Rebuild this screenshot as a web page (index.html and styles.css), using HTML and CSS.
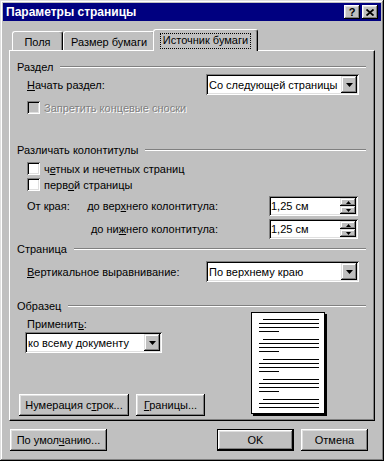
FILE: index.html
```html
<!DOCTYPE html>
<html lang="ru">
<head>
    <meta charset="UTF-8">
    <title>Параметры страницы</title>
    <link rel="stylesheet" href="styles.css">
</head>
<body>
    <div class="window">
        <div class="titlebar">
            <span class="title">Параметры страницы</span>
            <div class="title-buttons">
                <span class="tb-btn">?</span>
                <span class="tb-btn">
                    <svg width="8" height="7" viewBox="0 0 8 7"><path d="M0.5 0.5 L7.5 6.5 M7.5 0.5 L0.5 6.5" stroke="#000" stroke-width="1.8"/></svg>
                </span>
            </div>
        </div>
        <div class="content">
            <div class="tabs">
                <div class="tab tab-fields">Поля</div>
                <div class="tab tab-size">Размер бумаги</div>
                <div class="tab active"><span class="focus">Источник бумаги</span></div>
            </div>
            <div class="panel">
                <div class="group-head group-section"><span>Раздел</span><i class="etch"></i></div>
                <div class="field-row row-start">
                    <span><u>Н</u>ачать раздел:</span>
                    <div class="combo combo-wide">
                        <span class="combo-text">Со следующей страницы</span>
                        <span class="drop"><svg width="7" height="4" viewBox="0 0 7 4"><path d="M0 0 H7 L3.5 4 Z" fill="#000"/></svg></span>
                    </div>
                </div>
                <div class="check-row row-endnotes disabled">
                    <span class="check"></span>
                    <span>Запретить концевые сноски</span>
                </div>

                <div class="group-head group-headers"><span>Различать колонтитулы</span><i class="etch"></i></div>
                <div class="check-row row-even">
                    <span class="check"></span>
                    <span>ч<u>е</u>тных и нечетных страниц</span>
                </div>
                <div class="check-row row-first">
                    <span class="check"></span>
                    <span>перв<u>о</u>й страницы</span>
                </div>
                <div class="spin-row row-top">
                    <span class="edge-label">От края:</span>
                    <span class="offset-label">до вер<u>х</u>него колонтитула:</span>
                    <div class="spin">
                        <span class="spin-text">1,25 см</span>
                        <span class="spin-btns">
                            <span class="spin-btn"><svg width="5" height="3" viewBox="0 0 5 3"><path d="M2.5 0 L5 3 H0 Z" fill="#000"/></svg></span>
                            <span class="spin-btn"><svg width="5" height="3" viewBox="0 0 5 3"><path d="M0 0 H5 L2.5 3 Z" fill="#000"/></svg></span>
                        </span>
                    </div>
                </div>
                <div class="spin-row row-bottom">
                    <span class="edge-label"></span>
                    <span class="offset-label">до ни<u>ж</u>него колонтитула:</span>
                    <div class="spin">
                        <span class="spin-text">1,25 см</span>
                        <span class="spin-btns">
                            <span class="spin-btn"><svg width="5" height="3" viewBox="0 0 5 3"><path d="M2.5 0 L5 3 H0 Z" fill="#000"/></svg></span>
                            <span class="spin-btn"><svg width="5" height="3" viewBox="0 0 5 3"><path d="M0 0 H5 L2.5 3 Z" fill="#000"/></svg></span>
                        </span>
                    </div>
                </div>

                <div class="group-head group-page"><span>Страница</span><i class="etch"></i></div>
                <div class="field-row row-valign">
                    <span><u>В</u>ертикальное выравнивание:</span>
                    <div class="combo combo-wide">
                        <span class="combo-text">По верхнему краю</span>
                        <span class="drop"><svg width="7" height="4" viewBox="0 0 7 4"><path d="M0 0 H7 L3.5 4 Z" fill="#000"/></svg></span>
                    </div>
                </div>

                <div class="group-head group-sample"><span>Образец</span><i class="etch"></i></div>
                <div class="sample">
                    <div class="sample-left">
                        <span class="apply-label">Применит<u>ь</u>:</span>
                        <div class="combo combo-apply">
                            <span class="combo-text">ко всему документу</span>
                            <span class="drop"><svg width="7" height="4" viewBox="0 0 7 4"><path d="M0 0 H7 L3.5 4 Z" fill="#000"/></svg></span>
                        </div>
                        <div class="sample-buttons">
                            <button class="btn btn-lines">Нумерация с<u>т</u>рок...</button>
                            <button class="btn btn-borders"><u>Г</u>раницы...</button>
                        </div>
                    </div>
                    <svg class="preview" width="76" height="104" viewBox="0 0 76 104">
                        <rect x="2" y="2" width="74" height="102" fill="#000"/>
                        <rect x="0.5" y="0.5" width="73" height="101" fill="#fff" stroke="#000"/>
                        <g stroke="#000" stroke-width="1">
                            <path d="M12 7.5 H68 M8 11.5 H68 M8 15.5 H68 M8 19.5 H28"/>
                            <path d="M12 27.5 H68 M8 31.5 H68 M8 35.5 H68 M8 39.5 H28"/>
                            <path d="M12 47.5 H68 M8 51.5 H68 M8 55.5 H68 M8 59.5 H28"/>
                            <path d="M12 67.5 H68 M8 71.5 H68 M8 75.5 H68 M8 79.5 H28"/>
                            <path d="M12 87.5 H68 M8 91.5 H68 M8 95.5 H68"/>
                        </g>
                    </svg>
                </div>
            </div>
            <div class="footer">
                <button class="btn btn-default">По умол<u>ч</u>анию...</button>
                <button class="btn btn-ok">OK</button>
                <button class="btn btn-cancel">Отмена</button>
            </div>
        </div>
    </div>
</body>
</html>
```
FILE: styles.css
```css
body {
    margin: 0;
    font-family: "Liberation Sans", Arial, sans-serif;
    font-size: 11px;
    color: #000;
    background: #c0c0c0;
}
u {
    text-decoration: underline;
    text-underline-offset: 1px;
}
.window {
    width: 384px;
    height: 461px;
    box-sizing: border-box;
    padding: 3px;
    background: #c0c0c0;
    box-shadow: inset -1px -1px #000, inset 1px 1px #dfdfdf, inset -2px -2px #808080, inset 2px 2px #fff;
}
.titlebar {
    height: 18px;
    background: #000080;
    color: #fff;
    display: flex;
    align-items: center;
    justify-content: space-between;
    padding-left: 3px;
    padding-right: 3px;
}
.title {
    font-weight: bold;
    font-size: 12px;
}
.title-buttons {
    display: flex;
    gap: 2px;
}
.tb-btn {
    width: 16px;
    height: 14px;
    box-sizing: border-box;
    background: #c0c0c0;
    color: #000;
    font-weight: bold;
    font-size: 11px;
    line-height: 14px;
    text-align: center;
    display: flex;
    align-items: center;
    justify-content: center;
    box-shadow: inset -1px -1px #000, inset 1px 1px #fff, inset -2px -2px #808080, inset 2px 2px #dfdfdf;
}
.content {
    padding: 8px 6px 0;
}
.tabs {
    display: flex;
    align-items: flex-end;
    height: 21px;
    padding-left: 3px;
}
.tab {
    height: 19px;
    box-sizing: border-box;
    padding-top: 4px;
    line-height: 13px;
    text-align: center;
    border-top: 1px solid #fff;
    border-left: 1px solid #fff;
    border-right: 1px solid #000;
    border-radius: 3px 3px 0 0;
    box-shadow: inset -1px 0 #808080;
}
.tab-fields {
    width: 51px;
}
.tab-size {
    width: 92px;
}
.tab.active {
    width: 105px;
    height: 22px;
    margin: 0 -2px -1px;
    padding-top: 4px;
    background: #c0c0c0;
    position: relative;
    z-index: 2;
}
.focus {
    display: inline-block;
    padding: 0 2px 1px;
    outline: 1px dotted #000;
}
.panel {
    height: 371px;
    box-sizing: border-box;
    border-top: 1px solid #fff;
    border-left: 1px solid #fff;
    border-right: 1px solid #000;
    border-bottom: 1px solid #000;
    box-shadow: inset -1px -1px #808080;
    padding: 0 8px 0 7px;
}
.group-head {
    display: flex;
    align-items: center;
    gap: 7px;
    height: 12px;
    line-height: 12px;
}
.etch {
    flex: 1;
    height: 0;
    border-top: 1px solid #808080;
    border-bottom: 1px solid #fff;
}
.group-section { margin-top: 10px; }
.group-headers { margin-top: 30px; }
.group-page { margin-top: 4px; }
.group-sample { margin-top: 18px; }

.field-row {
    display: flex;
    align-items: center;
    justify-content: space-between;
    padding: 0 7px 0 10px;
}
.row-start { margin-top: 1px; }
.row-valign { margin-top: 6px; }

.combo {
    height: 21px;
    box-sizing: border-box;
    background: #fff;
    display: flex;
    align-items: center;
    padding: 2px;
    box-shadow: inset 1px 1px #808080, inset -1px -1px #fff, inset 2px 2px #000, inset -2px -2px #dfdfdf;
}
.combo-wide {
    width: 153px;
}
.combo-text {
    flex: 1;
    padding-left: 1px;
    white-space: nowrap;
}
.drop {
    width: 16px;
    height: 17px;
    box-sizing: border-box;
    background: #c0c0c0;
    display: flex;
    align-items: center;
    justify-content: center;
    box-shadow: inset -1px -1px #000, inset 1px 1px #dfdfdf, inset -2px -2px #808080, inset 2px 2px #fff;
}

.check-row {
    display: flex;
    align-items: center;
    gap: 4px;
    height: 13px;
    padding-left: 10px;
}
.check {
    width: 13px;
    height: 13px;
    background: #fff;
    box-shadow: inset 1px 1px #808080, inset -1px -1px #fff, inset 2px 2px #000, inset -2px -2px #dfdfdf;
}
.disabled {
    color: #808080;
    text-shadow: 1px 1px #fff;
}
.disabled .check {
    background: #c0c0c0;
}
.row-endnotes { margin-top: 6px; }
.row-even { margin-top: 6px; }
.row-first { margin-top: 3px; }

.spin-row {
    display: flex;
    align-items: center;
    padding-left: 10px;
}
.row-top { margin-top: 5px; }
.row-bottom { margin-top: 3px; }
.edge-label {
    width: 57px;
}
.offset-label {
    width: 134px;
    text-align: right;
}
.spin {
    width: 89px;
    height: 20px;
    box-sizing: border-box;
    margin-left: 51px;
    padding: 2px;
    background: #fff;
    display: flex;
    align-items: center;
    box-shadow: inset 1px 1px #808080, inset -1px -1px #fff, inset 2px 2px #000, inset -2px -2px #dfdfdf;
}
.spin-text {
    flex: 1;
}
.spin-btns {
    display: flex;
    flex-direction: column;
}
.spin-btn {
    width: 16px;
    height: 8px;
    box-sizing: border-box;
    background: #c0c0c0;
    display: flex;
    align-items: center;
    justify-content: center;
    box-shadow: inset -1px -1px #000, inset 1px 1px #dfdfdf, inset -2px -2px #808080, inset 2px 2px #fff;
}

.sample {
    display: flex;
    height: 104px;
}
.sample-left {
    width: 234px;
    display: flex;
    flex-direction: column;
    align-items: flex-start;
}
.apply-label {
    margin: 6px 0 0 10px;
    line-height: 13px;
}
.combo-apply {
    width: 137px;
    margin: 1px 0 0 8px;
}
.sample-buttons {
    margin: auto 0 0 2px;
    display: flex;
    gap: 7px;
}
.preview {
    display: block;
}

.btn {
    height: 22px;
    box-sizing: border-box;
    padding: 0 6px;
    font-family: "Liberation Sans", Arial, sans-serif;
    font-size: 11px;
    color: #000;
    background: #c0c0c0;
    border: none;
    box-shadow: inset -1px -1px #000, inset 1px 1px #fff, inset -2px -2px #808080, inset 2px 2px #dfdfdf;
}
.btn-lines { width: 110px; }
.btn-borders { width: 69px; }

.footer {
    display: flex;
    margin-top: 8px;
    padding: 0 7px 0 1px;
}
.btn-default {
    width: 97px;
}
.btn-ok {
    width: 77px;
    margin-left: auto;
    margin-right: 7px;
    border: 1px solid #000;
}
.btn-cancel {
    width: 67px;
}
```
